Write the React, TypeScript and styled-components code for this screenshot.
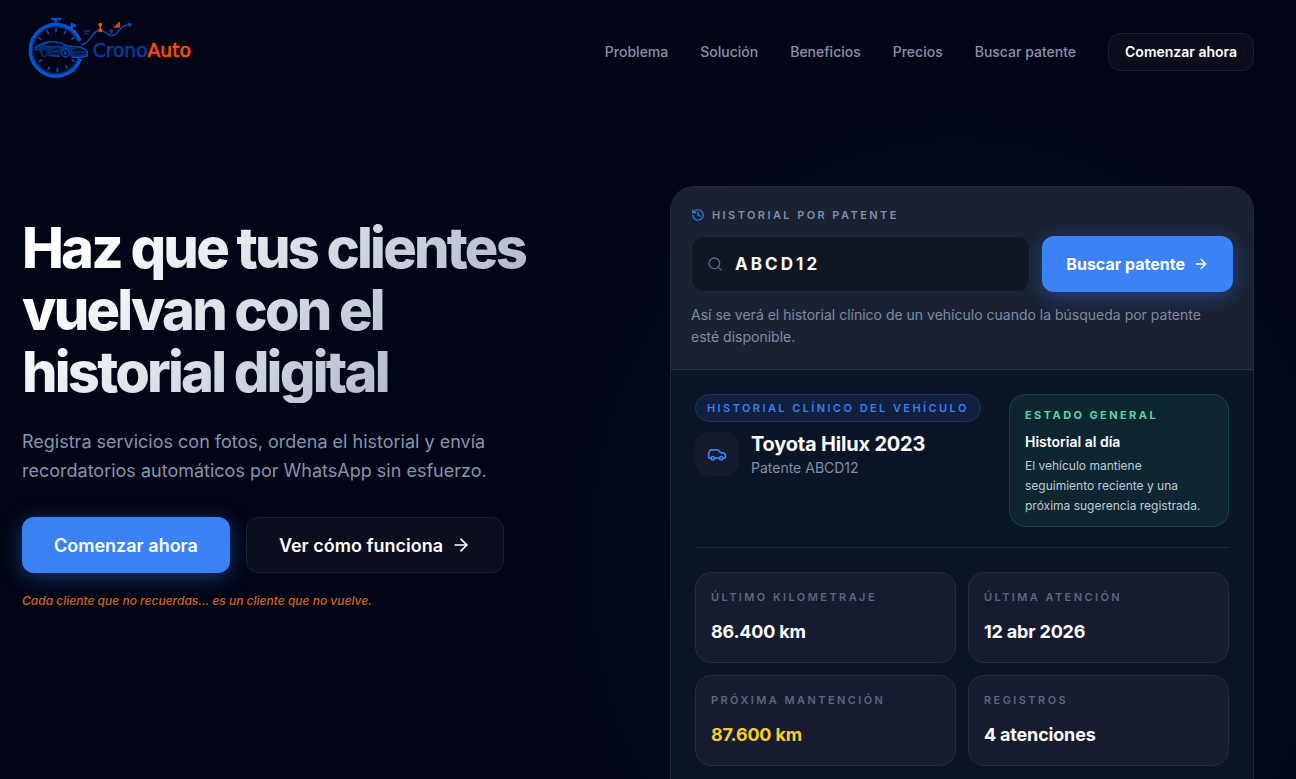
import React from "react";
import styled, { createGlobalStyle } from "styled-components";
import { ArrowRight, Car, History, Search } from "lucide-react";

const GlobalStyle = createGlobalStyle`
  *, *::before, *::after { box-sizing: border-box; }
  body {
    margin: 0;
    background: #020516;
    color: #fff;
    font-family: Inter, "Liberation Sans", sans-serif;
  }
  h1, h2, h3, p, dl, dt, dd { margin: 0; }
  a { color: inherit; text-decoration: none; }
  button, input { font: inherit; color: inherit; }
  button { cursor: pointer; }
`;

const Page = styled.div`
  height: 100vh;
  overflow: hidden;
  padding: 0 42px 0 22px;
  background: radial-gradient(ellipse 420px 480px at 74% 560px, #04102c 0%, #030d27 50%, #020516 100%);
`;

const Header = styled.header`
  display: flex;
  align-items: center;
  justify-content: space-between;
  padding: 16px 0;
`;

const LogoLink = styled.a`
  display: block;
  line-height: 0;
`;

const LogoWord = styled.text`
  font-family: "DejaVu Sans", sans-serif;
  font-size: 56px;
  stroke-width: 2px;
`;

const Nav = styled.nav`
  display: flex;
  align-items: center;
  gap: 32px;
  font-size: 14px;
  font-weight: 500;
  line-height: 20px;
  color: #8493aa;
`;

const Button = styled.button<{ $tone: "primary" | "ghost"; $size: "sm" | "md" | "lg" }>`
  display: inline-flex;
  align-items: center;
  justify-content: center;
  gap: 8px;
  height: ${({ $size }) => ($size === "sm" ? 38 : 56)}px;
  padding: 0 ${({ $size }) => ({ sm: 16, md: 24, lg: 32 })[$size]}px;
  border: ${({ $tone }) => ($tone === "primary" ? "0" : "1px solid #1b1f2e")};
  border-radius: 12px;
  background: ${({ $tone }) => ($tone === "primary" ? "#3b82f6" : "#0b0e1c")};
  box-shadow: ${({ $tone }) => ($tone === "primary" ? "0 4px 20px rgba(59, 130, 246, 0.4)" : "none")};
  color: #fff;
  font-size: ${({ $size }) => ({ sm: 14, md: 16, lg: 18 })[$size]}px;
  font-weight: ${({ $size }) => ($size === "md" ? 700 : 600)};
  white-space: nowrap;
`;

const Hero = styled.main`
  display: grid;
  grid-template-columns: minmax(0, 1fr) minmax(0, 1fr);
  gap: 64px;
  align-items: start;
  padding-top: 82px;
`;

const Intro = styled.section`
  padding-top: 31px;
`;

const Headline = styled.h1`
  font-size: 56px;
  line-height: 62px;
  font-weight: 800;
  font-optical-sizing: none;
  letter-spacing: -0.05em;
  background: linear-gradient(135deg, #fff 0%, #fff 12%, #94a3b8 94%);
  background-clip: text;
  -webkit-background-clip: text;
  color: transparent;
`;

const Lead = styled.p`
  max-width: 480px;
  margin-top: 24px;
  font-size: 18px;
  line-height: 29px;
  color: #8594ad;
`;

const Actions = styled.div`
  display: flex;
  gap: 16px;
  margin-top: 32px;
`;

const Note = styled.p`
  margin-top: 18px;
  font-size: 12px;
  line-height: 20px;
  font-weight: 500;
  font-style: italic;
  color: #d56316;
`;

const Card = styled.section`
  border: 1px solid #1f293c;
  border-radius: 24px;
  overflow: hidden;
  background: #0c1428;
`;

const SearchPanel = styled.form`
  padding: 18px 20px 21px;
  border-bottom: 1px solid #293244;
  background: #1a2133;
`;

const Eyebrow = styled.label`
  display: flex;
  align-items: center;
  gap: 7px;
  font-size: 11px;
  line-height: 20px;
  font-weight: 600;
  letter-spacing: 0.22em;
  text-transform: uppercase;
  color: #8190a8;

  svg { color: #3b82f6; }
`;

const SearchRow = styled.div`
  display: flex;
  gap: 12px;
  margin-top: 11px;
`;

const Field = styled.div`
  display: flex;
  flex: 1;
  min-width: 0;
  align-items: center;
  gap: 12px;
  padding: 0 15px;
  border: 1px solid #222836;
  border-radius: 12px;
  background: #111623;

  svg { flex: none; color: #5b6b84; }
`;

const PlateInput = styled.input`
  flex: 1;
  min-width: 0;
  padding: 0;
  border: 0;
  outline: 0;
  background: transparent;
  font-size: 17px;
  font-weight: 700;
  letter-spacing: 0.18em;
  text-transform: uppercase;
`;

const Hint = styled.p`
  max-width: 520px;
  margin-top: 12px;
  font-size: 14px;
  line-height: 22px;
  color: #7f8da5;
`;

const Details = styled.div`
  padding: 24px 24px 64px;
`;

const Summary = styled.div`
  display: flex;
  align-items: flex-start;
  justify-content: space-between;
  gap: 24px;
  padding-bottom: 20px;
  border-bottom: 1px solid #1d2739;
`;

const Badge = styled.span`
  display: inline-block;
  padding: 0 11px;
  border: 1px solid #1b3565;
  border-radius: 14px;
  background: #11203f;
  font-size: 11px;
  line-height: 26px;
  font-weight: 600;
  letter-spacing: 0.22em;
  text-transform: uppercase;
  color: #3b7ff0;
  white-space: nowrap;
`;

const Vehicle = styled.div`
  display: flex;
  gap: 12px;
  margin-top: 10px;
`;

const VehicleIcon = styled.div`
  display: grid;
  place-items: center;
  width: 44px;
  height: 44px;
  border-radius: 14px;
  background: #151a2d;
  color: #3b82f6;
`;

const VehicleName = styled.h2`
  font-size: 20px;
  line-height: 24px;
  font-weight: 700;
  letter-spacing: -0.01em;
`;

const Plate = styled.p`
  font-size: 14px;
  line-height: 24px;
  color: #8190a8;
`;

const Status = styled.aside`
  flex: none;
  width: 220px;
  padding: 10px 15px;
  border: 1px solid #0d4944;
  border-radius: 16px;
  background: #0e2631;
`;

const StatusLabel = styled.p`
  font-size: 11px;
  line-height: 20px;
  font-weight: 700;
  letter-spacing: 0.22em;
  text-transform: uppercase;
  color: #56d8a2;
`;

const StatusTitle = styled.h3`
  margin-top: 6px;
  font-size: 14px;
  line-height: 22px;
  font-weight: 600;
`;

const StatusText = styled.p`
  margin-top: 3px;
  font-size: 12px;
  line-height: 20px;
  color: #c0cad7;
`;

const Stats = styled.dl`
  display: grid;
  grid-template-columns: 1fr 1fr;
  gap: 12px;
  padding-top: 24px;
`;

const Stat = styled.div`
  padding: 14px 15px 17px;
  border: 1px solid #252d3f;
  border-radius: 16px;
  background: #161b30;
`;

const StatLabel = styled.dt`
  font-size: 11px;
  line-height: 20px;
  font-weight: 600;
  letter-spacing: 0.22em;
  text-transform: uppercase;
  color: #5a6880;
`;

const StatValue = styled.dd<{ $highlight?: boolean }>`
  margin-top: 12px;
  font-size: 18px;
  line-height: 26px;
  font-weight: 700;
  letter-spacing: -0.01em;
  color: ${({ $highlight }) => ($highlight ? "#facc2e" : "#fff")};
`;

const navItems = ["Problema", "Solución", "Beneficios", "Precios", "Buscar patente"];

const stats = [
  { label: "Último kilometraje", value: "86.400 km" },
  { label: "Última atención", value: "12 abr 2026" },
  { label: "Próxima mantención", value: "87.600 km", highlight: true },
  { label: "Registros", value: "4 atenciones" },
];

function Logo() {
  return (
    <svg width="172" height="72" viewBox="18 24 516 216" fill="none" role="img" aria-label="CronoAuto">
      {/* stopwatch */}
      <g stroke="#0754c6">
        <path d="M192 99A77 77 0 1 0 193 152" strokeWidth="11" />
        <path d="M185 101A70 70 0 1 0 186 150" stroke="#052c78" strokeWidth="4" />
        <path d="M106 33H135M120 34V48" strokeWidth="7" />
        <path d="M110 42H131" stroke="#06348a" strokeWidth="5" />
        <path d="M164 47L180 55M170 52L165 62" strokeWidth="8" />
        <path
          d="M120 60V72M92 67L98 78M67 88L77 95M56 124H69M68 161L78 155M95 187L101 176M124 192V179M154 182L148 172M176 161L167 154M150 67L144 78M175 88L166 95"
          stroke="#0b4aa8"
          strokeWidth="5"
        />
      </g>
      {/* sports car */}
      <path
        d="M56 118C70 110 78 102 96 101C118 98 134 101 146 110C166 117 196 113 210 124L216 133L212 145L198 149H164L160 138C154 124 142 121 134 132L132 146L98 143L96 130C90 119 78 121 74 134L68 130Z"
        fill="#062a70"
      />
      <path d="M94 107L116 103L128 115L84 113ZM122 104C132 106 138 110 142 115L134 116Z" fill="#020516" />
      <path d="M104 128L130 121M104 137L130 136M170 127C184 120 198 122 206 128ZM180 139L208 135" stroke="#020516" strokeWidth="3" />
      <g stroke="#0b4db4" strokeWidth="4" strokeLinecap="round" strokeLinejoin="round">
        <path d="M58 118C76 105 92 101 112 101C132 100 142 108 152 113C178 114 206 116 214 130L213 144L198 148H168" />
        <path d="M88 116C110 114 126 118 150 116M98 143L132 146" stroke="#0a3f98" strokeWidth="3" />
      </g>
      <ellipse cx="85" cy="135" rx="9" ry="10" fill="#020516" stroke="#0a429c" strokeWidth="3" />
      <ellipse cx="148" cy="135" rx="12" ry="12" fill="#04153c" stroke="#0a429c" strokeWidth="4" />
      <ellipse cx="148" cy="135" rx="4" ry="6" fill="#0a45a5" />
      {/* trend line */}
      <g stroke="#073585" strokeWidth="4" strokeLinecap="round">
        <path d="M197 110C225 108 226 66 252 67C270 68 274 83 287 83C308 83 309 50 340 50" stroke="#0a45a5" strokeWidth="5" />
        <path d="M204 69H222M204 77H217M286 69V83" />
      </g>
      <circle cx="286" cy="69" r="5" fill="#0a45a5" />
      <circle cx="341" cy="50" r="6" fill="#0a45a5" />
      <path d="M253 50V67" stroke="#f4490c" strokeWidth="4" />
      <circle cx="253" cy="50" r="6" fill="#f4490c" />
      <circle cx="253" cy="67" r="6" fill="#f4490c" />
      <path d="M294 59V53H300V47H306V42H312V59Z" fill="#c9401a" />
      <LogoWord x="230" y="147" fill="#083a96" stroke="#083a96">
        Crono
        <tspan fill="#fb4a0a" stroke="#fb4a0a">
          Auto
        </tspan>
      </LogoWord>
    </svg>
  );
}

export default function App() {
  return (
    <Page>
      <GlobalStyle />
      <Header>
        <LogoLink href="#inicio">
          <Logo />
        </LogoLink>
        <Nav>
          {navItems.map((item) => (
            <a key={item} href="#">
              {item}
            </a>
          ))}
          <Button as="a" href="#comenzar" $tone="ghost" $size="sm">
            Comenzar ahora
          </Button>
        </Nav>
      </Header>

      <Hero>
        <Intro>
          <Headline>
            Haz que tus clientes
            <br />
            vuelvan con el
            <br />
            historial digital
          </Headline>
          <Lead>Registra servicios con fotos, ordena el historial y envía recordatorios automáticos por WhatsApp sin esfuerzo.</Lead>
          <Actions>
            <Button type="button" $tone="primary" $size="lg">
              Comenzar ahora
            </Button>
            <Button type="button" $tone="ghost" $size="lg">
              Ver cómo funciona
              <ArrowRight size={20} />
            </Button>
          </Actions>
          <Note>Cada cliente que no recuerdas... es un cliente que no vuelve.</Note>
        </Intro>

        <Card>
          <SearchPanel onSubmit={(event: React.FormEvent) => event.preventDefault()}>
            <Eyebrow htmlFor="plate">
              <History size={14} />
              Historial por patente
            </Eyebrow>
            <SearchRow>
              <Field>
                <Search size={16} />
                <PlateInput id="plate" type="text" defaultValue="ABCD12" />
              </Field>
              <Button type="submit" $tone="primary" $size="md">
                Buscar patente
                <ArrowRight size={16} />
              </Button>
            </SearchRow>
            <Hint>Así se verá el historial clínico de un vehículo cuando la búsqueda por patente esté disponible.</Hint>
          </SearchPanel>

          <Details>
            <Summary>
              <div>
                <Badge>Historial clínico del vehículo</Badge>
                <Vehicle>
                  <VehicleIcon>
                    <Car size={20} />
                  </VehicleIcon>
                  <div>
                    <VehicleName>Toyota Hilux 2023</VehicleName>
                    <Plate>Patente ABCD12</Plate>
                  </div>
                </Vehicle>
              </div>
              <Status>
                <StatusLabel>Estado general</StatusLabel>
                <StatusTitle>Historial al día</StatusTitle>
                <StatusText>El vehículo mantiene seguimiento reciente y una próxima sugerencia registrada.</StatusText>
              </Status>
            </Summary>
            <Stats>
              {stats.map(({ label, value, highlight }) => (
                <Stat key={label}>
                  <StatLabel>{label}</StatLabel>
                  <StatValue $highlight={highlight}>{value}</StatValue>
                </Stat>
              ))}
            </Stats>
          </Details>
        </Card>
      </Hero>
    </Page>
  );
}
